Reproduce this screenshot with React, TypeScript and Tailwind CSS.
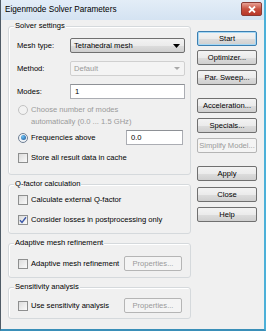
import type { ReactNode } from 'react';

const font = { fontFamily: '"Liberation Sans", Arial, sans-serif' };

function Btn({ children, disabled, primary, className = '' }: { children: ReactNode; disabled?: boolean; primary?: boolean; className?: string }) {
  const tone = disabled
    ? 'border-[#b5b5b5] bg-[#f4f4f4] text-[#9a9a9a]'
    : primary
      ? 'border-[#3c7fb1] bg-[linear-gradient(#f3f3f3_0%,#ebebeb_50%,#dddddd_51%,#cfcfcf_100%)] text-black shadow-[inset_0_0_0_1px_#a6d8f5]'
      : 'border-[#707070] bg-[linear-gradient(#f3f3f3_0%,#ebebeb_50%,#dddddd_51%,#cfcfcf_100%)] text-black';
  return (
    <div className={`flex h-[15px] items-center justify-center whitespace-nowrap rounded-[2px] border text-[7.6px] leading-none ${tone} ${className}`}>
      {children}
    </div>
  );
}

function Check({ checked, label }: { checked?: boolean; label: string }) {
  return (
    <div className="flex h-[12px] items-center gap-[3px] pl-[9px] text-[7.6px] leading-none">
      <span className="flex h-[10px] w-[10px] shrink-0 items-center justify-center border border-[#8e8f8f] bg-[linear-gradient(135deg,#dcdcdc,#fafafa)]">
        {checked ? (
          <svg width="8" height="8" viewBox="0 0 8 8">
            <path d="M1 4.2 L3 6.4 L7 1.2" fill="none" stroke="#3b57a8" strokeWidth="1.4" />
          </svg>
        ) : null}
      </span>
      <span>{label}</span>
    </div>
  );
}

function Group({ title, className, children }: { title: string; className: string; children: ReactNode }) {
  return (
    <div className={`relative rounded-[3px] border border-[#d5d9dc] shadow-[inset_1px_1px_0_#ffffff] ${className}`}>
      <span className="absolute -top-[5px] left-[5px] bg-[#f0f0f0] px-[1px] text-[7.6px] leading-none text-black">{title}</span>
      {children}
    </div>
  );
}

export default function App() {
  return (
    <div className="h-[331px] w-[266px] overflow-hidden whitespace-nowrap bg-[#f0f0f0]" style={font}>
      <div className="flex h-full w-full flex-col border-b-2 border-l border-r-2 border-[#4f5b66] border-b-[#3a8fb8] border-r-[#4cb0d8]">
        <div className="flex h-[20px] shrink-0 items-center justify-between bg-[linear-gradient(#e3edf7,#d4e3f2)] pl-[4px] pr-[2px]">
          <span className="text-[8.2px] leading-none text-black">Eigenmode Solver Parameters</span>
          <div className="mb-[2px] flex h-[14px] w-[21px] items-center justify-center rounded-[2px] border border-[#8a3b35] bg-[linear-gradient(#e8a195,#c7503f_50%,#b8382a)]">
            <svg width="8" height="7" viewBox="0 0 8 7">
              <path d="M1 0.5 L7 6.5 M7 0.5 L1 6.5" stroke="#ffffff" strokeWidth="1.8" />
            </svg>
          </div>
        </div>

        <div className="flex flex-1 gap-[6px] pl-[7px] pt-[6px]">
          <div className="flex w-[183px] flex-col">
            <Group title="Solver settings" className="h-[149px]">
              <div className="flex flex-col pl-[8px] pr-[5px] pt-[11px] text-[7.6px] leading-none">
                <div className="flex h-[15px] items-center">
                  <span className="w-[53px]">Mesh type:</span>
                  <div className="flex h-[15px] flex-1 items-center justify-between rounded-[2px] border border-[#707070] bg-[linear-gradient(#f3f3f3_0%,#ebebeb_50%,#dddddd_51%,#cfcfcf_100%)] pl-[3px] pr-[4px]">
                    <span>Tetrahedral mesh</span>
                    <svg width="7" height="4" viewBox="0 0 7 4"><path d="M0 0 H7 L3.5 4 Z" fill="#000" /></svg>
                  </div>
                </div>
                <div className="mt-[8px] flex h-[15px] items-center">
                  <span className="w-[53px]">Method:</span>
                  <div className="flex h-[15px] flex-1 items-center justify-between rounded-[2px] border border-[#d0d0d0] bg-[#f4f4f4] pl-[3px] pr-[4px] text-[#9a9a9a]">
                    <span>Default</span>
                    <svg width="6" height="3" viewBox="0 0 6 3"><path d="M0 0 H6 L3 3 Z" fill="#a8a8a8" /></svg>
                  </div>
                </div>
                <div className="mt-[8px] flex h-[15px] items-center">
                  <span className="w-[53px]">Modes:</span>
                  <div className="flex h-[15px] flex-1 items-center border border-[#abadb3] border-t-[#8e9196] bg-white pl-[4px]">1</div>
                </div>
                <div className="mt-[5px] flex h-[12px] items-center gap-[3px] pl-[1px] text-[#9a9a9a]">
                  <span className="h-[10px] w-[10px] rounded-full border border-[#c2c2c2] bg-[#f2f2f2]" />
                  <span>Choose number of modes</span>
                </div>
                <div className="flex h-[12px] items-center pl-[14px] text-[#9a9a9a]">automatically (0.0 ... 1.5 GHz)</div>
                <div className="mt-[2px] flex h-[15px] items-center">
                  <div className="flex w-[109px] items-center gap-[3px] pl-[1px]">
                    <span className="flex h-[10px] w-[10px] items-center justify-center rounded-full border border-[#6f7f94] bg-[#eef2f6]">
                      <span className="h-[5px] w-[5px] rounded-full bg-[radial-gradient(circle_at_35%_35%,#6fc4f5,#164f94)]" />
                    </span>
                    <span>Frequencies above</span>
                  </div>
                  <div className="flex h-[15px] w-[57px] items-center border border-[#abadb3] border-t-[#8e9196] bg-white pl-[4px]">0.0</div>
                </div>
                <div className="-ml-[8px] mt-[7px]">
                  <Check label="Store all result data in cache" />
                </div>
              </div>
            </Group>

            <Group title="Q-factor calculation" className="mt-[9px] h-[50px]">
              <div className="flex flex-col gap-[8px] pt-[9px]">
                <Check label="Calculate external Q-factor" />
                <Check checked label="Consider losses in postprocessing only" />
              </div>
            </Group>

            <Group title="Adaptive mesh refinement" className="mt-[9px] h-[35px]">
              <div className="flex items-center justify-between pr-[8px] pt-[12px]">
                <Check label="Adaptive mesh refinement" />
                <Btn disabled className="h-[14px] w-[58px]">Properties...</Btn>
              </div>
            </Group>

            <Group title="Sensitivity analysis" className="mt-[9px] h-[32px]">
              <div className="flex items-center justify-between pr-[8px] pt-[10px]">
                <Check label="Use sensitivity analysis" />
                <Btn disabled className="h-[14px] w-[58px]">Properties...</Btn>
              </div>
            </Group>
          </div>

          <div className="flex w-[60px] flex-col pt-[5px]">
            <Btn primary>Start</Btn>
            <Btn className="mt-[4px]">Optimizer...</Btn>
            <Btn className="mt-[5px]">Par. Sweep...</Btn>
            <Btn className="mt-[13px]">Acceleration...</Btn>
            <Btn className="mt-[5px]">Specials...</Btn>
            <Btn disabled className="mt-[5px]">Simplify Model...</Btn>
            <Btn className="mt-[13px]">Apply</Btn>
            <Btn className="mt-[6px]">Close</Btn>
            <Btn className="mt-[5px]">Help</Btn>
          </div>
        </div>
      </div>
    </div>
  );
}
